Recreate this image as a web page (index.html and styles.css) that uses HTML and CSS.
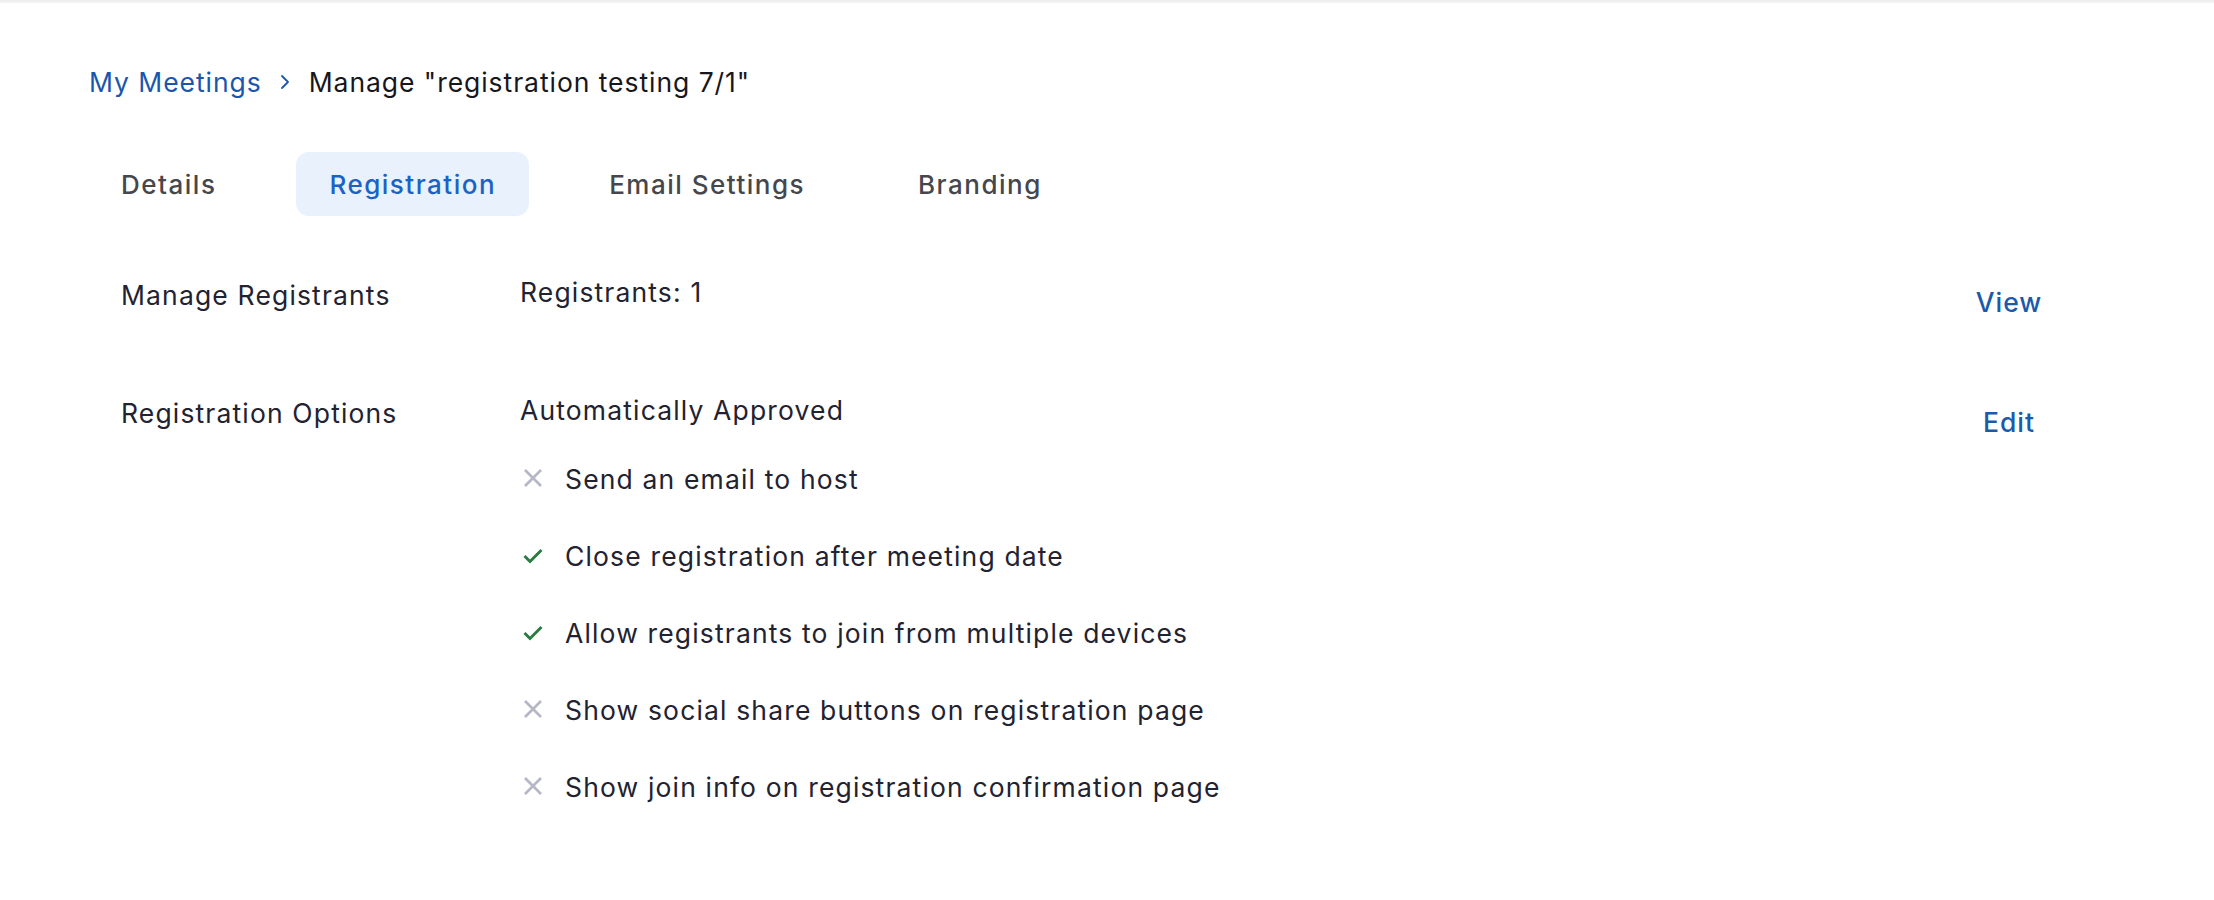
FILE: index.html
```html
<!DOCTYPE html>
<html lang="en">
<head>
<meta charset="utf-8">
<title>Manage registration</title>
<link rel="stylesheet" href="styles.css">
</head>
<body>
<div class="topline"></div>
<main class="page">
  <nav class="breadcrumb">
    <a class="crumb-link" href="#">My Meetings</a>
    <svg class="chev" width="10" height="16" viewBox="0 0 10 16"><path d="M2 2 L8 8 L2 14" fill="none" stroke="#1a57b0" stroke-width="1.8" stroke-linecap="round" stroke-linejoin="round"/></svg>
    <span class="crumb-current">Manage "registration testing 7/1"</span>
  </nav>

  <div class="tabs">
    <div class="tab">Details</div>
    <div class="tab active">Registration</div>
    <div class="tab">Email Settings</div>
    <div class="tab">Branding</div>
  </div>

  <section class="rows">
    <div class="row row-first">
      <div class="label">Manage Registrants</div>
      <div class="value">Registrants: 1</div>
      <div class="action"><a href="#">View</a></div>
    </div>
    <div class="row">
      <div class="label">Registration Options</div>
      <div class="value">
        <div class="value-head">Automatically Approved</div>
        <ul class="opts">
          <li class="opt"><svg class="ico" width="22" height="22" viewBox="0 0 22 22"><path d="M3 2 L19 18 M19 2 L3 18" stroke="#b6b6c6" stroke-width="2.7"/></svg><span>Send an email to host</span></li>
          <li class="opt"><svg class="ico" width="22" height="22" viewBox="0 0 22 22"><path d="M2.5 11 L8 16.5 L19.5 5" fill="none" stroke="#2a7b40" stroke-width="2.9"/></svg><span>Close registration after meeting date</span></li>
          <li class="opt"><svg class="ico" width="22" height="22" viewBox="0 0 22 22"><path d="M2.5 11 L8 16.5 L19.5 5" fill="none" stroke="#2a7b40" stroke-width="2.9"/></svg><span>Allow registrants to join from multiple devices</span></li>
          <li class="opt"><svg class="ico" width="22" height="22" viewBox="0 0 22 22"><path d="M3 2 L19 18 M19 2 L3 18" stroke="#b6b6c6" stroke-width="2.7"/></svg><span>Show social share buttons on registration page</span></li>
          <li class="opt"><svg class="ico" width="22" height="22" viewBox="0 0 22 22"><path d="M3 2 L19 18 M19 2 L3 18" stroke="#b6b6c6" stroke-width="2.7"/></svg><span>Show join info on registration confirmation page</span></li>
        </ul>
      </div>
      <div class="action action-edit"><a href="#">Edit</a></div>
    </div>
  </section>
</main>
</body>
</html>
```

FILE: styles.css
```css
* { box-sizing: border-box; }
html, body { margin: 0; padding: 0; background: #ffffff; }
body {
  font-family: Inter, "Noto Sans", "Liberation Sans", sans-serif;
  color: #222230;
}
.topline {
  height: 3px;
  background: linear-gradient(#ececef, #f6f6f7);
}
.page {
  padding: 0 145px 0 89px;
}
.breadcrumb {
  display: flex;
  align-items: center;
  height: 40px;
  margin-top: 59px;
  font-size: 26.5px;
  letter-spacing: 0.95px;
}
.crumb-link {
  color: #1a56ad;
  text-decoration: none;
}
.chev {
  margin: 0 19px 0 18px;
}
.crumb-current {
  color: #16161c;
}
.tabs {
  display: flex;
  gap: 47px;
  margin-top: 50px;
  margin-left: -1px;
}
.tab {
  height: 64px;
  display: flex;
  align-items: center;
  padding: 0 33px;
  border-radius: 13px;
  font-size: 26px;
  font-weight: 500;
  letter-spacing: 1.5px;
  color: #45474d;
}
.tab.active {
  background: #e8f1fc;
  color: #1b62c4;
}
.rows {
  margin-top: 61px;
  padding-left: 32px;
}
.row {
  display: flex;
  align-items: flex-start;
  font-size: 26.5px;
  line-height: 36px;
  letter-spacing: 1.15px;
}
.row-first {
  height: 118px;
}
.label {
  width: 399px;
  flex: none;
}
.value {
  flex: 1;
  margin-top: -3px;
}
.opts {
  list-style: none;
  margin: 12px 0 0;
  padding: 0;
}
.opt {
  display: flex;
  align-items: center;
  height: 77px;
}
.ico {
  flex: none;
  margin: 0 21px 0 2px;
}
.action {
  width: 120px;
  flex: none;
  text-align: center;
  margin-top: 7px;
  font-weight: 500;
  letter-spacing: 1px;
}
.action-edit { margin-top: 9px; }
.action a {
  color: #1a5aab;
  text-decoration: none;
}
```
